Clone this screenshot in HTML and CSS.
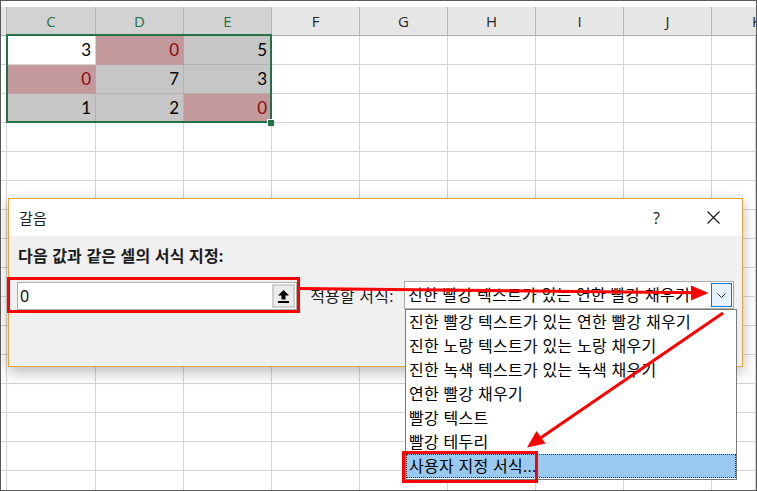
FILE: index.html
```html
<!DOCTYPE html>
<html lang="ko">
<head>
<meta charset="utf-8">
<title>갈음</title>
<link rel="stylesheet" href="styles.css">
</head>
<body>
<div class="screen">
  <div class="topstrip"></div>
  <div class="sheet">
    <div class="row head">
      <span class="corner"></span><span class="on">C</span><span class="on">D</span><span class="on">E</span><span>F</span><span>G</span><span>H</span><span>I</span><span>J</span><span class="clip">K</span>
    </div>
    <div class="row">
      <span class="rh"></span><span class="active">3</span><span class="pink">0</span><span class="gray">5</span><span></span><span></span><span></span><span></span><span></span><span></span>
    </div>
    <div class="row">
      <span class="rh"></span><span class="pink">0</span><span class="gray">7</span><span class="gray">3</span><span></span><span></span><span></span><span></span><span></span><span></span>
    </div>
    <div class="row">
      <span class="rh"></span><span class="gray">1</span><span class="gray">2</span><span class="pink">0</span><span></span><span></span><span></span><span></span><span></span><span></span>
    </div>
    <div class="row"><span class="rh"></span><span></span><span></span><span></span><span></span><span></span><span></span><span></span><span></span><span></span></div>
    <div class="row"><span class="rh"></span><span></span><span></span><span></span><span></span><span></span><span></span><span></span><span></span><span></span></div>
    <div class="row"><span class="rh"></span><span></span><span></span><span></span><span></span><span></span><span></span><span></span><span></span><span></span></div>
    <div class="row"><span class="rh"></span><span></span><span></span><span></span><span></span><span></span><span></span><span></span><span></span><span></span></div>
    <div class="row"><span class="rh"></span><span></span><span></span><span></span><span></span><span></span><span></span><span></span><span></span><span></span></div>
    <div class="row"><span class="rh"></span><span></span><span></span><span></span><span></span><span></span><span></span><span></span><span></span><span></span></div>
    <div class="row"><span class="rh"></span><span></span><span></span><span></span><span></span><span></span><span></span><span></span><span></span><span></span></div>
    <div class="row"><span class="rh"></span><span></span><span></span><span></span><span></span><span></span><span></span><span></span><span></span><span></span></div>
    <div class="row"><span class="rh"></span><span></span><span></span><span></span><span></span><span></span><span></span><span></span><span></span><span></span></div>
    <div class="row"><span class="rh"></span><span></span><span></span><span></span><span></span><span></span><span></span><span></span><span></span><span></span></div>
    <div class="row"><span class="rh"></span><span></span><span></span><span></span><span></span><span></span><span></span><span></span><span></span><span></span></div>
    <div class="row"><span class="rh"></span><span></span><span></span><span></span><span></span><span></span><span></span><span></span><span></span><span></span></div>
    <div class="row"><span class="rh"></span><span></span><span></span><span></span><span></span><span></span><span></span><span></span><span></span><span></span></div>
  </div>

  <div class="selection"></div>
  <div class="handle"></div>

  <div class="dialog">
    <div class="titlebar">
      <span class="title">갈음</span>
      <span class="tbtn">?</span>
      <span class="tbtn">
        <svg class="close" width="13" height="13" viewBox="0 0 13 13"><path d="M0.5 0.5 L12.5 12.5 M12.5 0.5 L0.5 12.5" stroke="#1a1a1a" stroke-width="1.2" fill="none"/></svg>
      </span>
    </div>
    <div class="body">
      <div class="prompt">다음 값과 같은 셀의 서식 지정:</div>
      <div class="inputs">
        <div class="refbox">
          <span class="refval">0</span>
          <span class="refbtn">
            <svg width="11" height="13" viewBox="0 0 11 13"><polygon points="5.5,0 11,5.5 7.5,5.5 7.5,9.5 3.5,9.5 3.5,5.5 0,5.5" fill="#000"/><rect x="0" y="11" width="11" height="2" fill="#000"/></svg>
          </span>
        </div>
        <span class="applylabel">적용할 서식:</span>
        <div class="combo">
          <span class="combo-text">진한 빨강 텍스트가 있는 연한 빨강 채우기</span>
          <span class="combo-btn">
            <svg width="9" height="5" viewBox="0 0 9 5"><path d="M0.5 0.5 L4.5 4.5 L8.5 0.5" stroke="#333" stroke-width="1" fill="none"/></svg>
          </span>
        </div>
      </div>
    </div>
  </div>

  <ul class="droplist">
    <li>진한 빨강 텍스트가 있는 연한 빨강 채우기</li>
    <li>진한 노랑 텍스트가 있는 노랑 채우기</li>
    <li>진한 녹색 텍스트가 있는 녹색 채우기</li>
    <li>연한 빨강 채우기</li>
    <li>빨강 텍스트</li>
    <li>빨강 테두리</li>
    <li class="sel">사용자 지정 서식...</li>
  </ul>

  <div class="mark mark-ref"></div>
  <div class="mark mark-item"></div>

  <svg class="arrows" width="757" height="491" viewBox="0 0 757 491">
    <line x1="299" y1="288.5" x2="694" y2="292.8" stroke="#ff0000" stroke-width="3"/>
    <polygon points="691,285.5 708.5,293 691,300.5" fill="#ff0000"/>
    <line x1="723" y1="313" x2="539" y2="439" stroke="#ff0000" stroke-width="3"/>
    <polygon points="527,447.5 536.5,431 545.5,443.5" fill="#ff0000"/>
  </svg>
</div>
</body>
</html>
```

FILE: styles.css
```css
* {
  box-sizing: border-box;
}

body {
  margin: 0;
  background: #ffffff;
}

.screen {
  position: relative;
  width: 757px;
  height: 491px;
  border: 1px solid #595959;
  overflow: hidden;
  background: #ffffff;
  font-family: "Open Sans", "Noto Sans CJK KR", sans-serif;
  color: #000;
}

.topstrip {
  height: 6px;
  background: #ffffff;
}

.row {
  display: grid;
  grid-template-columns: 6px 89px repeat(7, 88px) 1fr;
  height: 29px;
}

.row > span {
  border-right: 1px solid #d4d4d4;
  border-bottom: 1px solid #d4d4d4;
  font: 17px/28px Lato, "Liberation Sans", sans-serif;
  text-align: right;
  padding-right: 4px;
  color: #000;
  overflow: hidden;
}

.row > span.rh {
  background: #ffffff;
  padding: 0;
}

.head > span {
  background: #e6e6e6;
  border-right-color: #b4b4b4;
  border-bottom-color: #ababab;
  font: 15px/28px "Open Sans", sans-serif;
  text-align: center;
  padding: 0;
  color: #262626;
}

.head > span.corner {
  background: #e6e6e6;
}

.head > span.on {
  background: #d2d2d2;
  color: #217346;
}

.head > span.clip {
  text-align: left;
  padding-left: 40px;
  border-right: none;
}

.row > span.active {
  background: #ffffff;
}

.row > span.pink {
  background: #c4999c;
  color: #8a0b0b;
  border-color: #b9a0a2;
}

.row > span.gray {
  background: #c6c6c6;
  border-color: #b2b2b2;
}

.selection {
  position: absolute;
  left: 5px;
  top: 33px;
  width: 266px;
  height: 89px;
  border: 2px solid #217346;
}

.handle {
  position: absolute;
  left: 266px;
  top: 118px;
  width: 7px;
  height: 7px;
  background: #217346;
  border-left: 1px solid #ffffff;
  border-top: 1px solid #ffffff;
}

.dialog {
  position: absolute;
  left: 7px;
  top: 197px;
  width: 735px;
  height: 169px;
  border: 1px solid #e6a23c;
  background: #f0f0f0;
  box-shadow: 0 5px 14px rgba(0, 0, 0, 0.28);
  display: flex;
  flex-direction: column;
}

.titlebar {
  height: 37px;
  background: #ffffff;
  display: flex;
  align-items: center;
  padding-left: 10px;
  font-size: 15px;
  line-height: 20px;
  color: #1a1a1a;
}

.title {
  flex: 1;
  letter-spacing: 0.3px;
}

.tbtn {
  width: 57px;
  display: flex;
  justify-content: center;
  align-items: center;
  font-size: 16px;
  color: #1a1a1a;
}

.body {
  padding: 10px 8px 0 8px;
}

.prompt {
  font-weight: bold;
  font-size: 16px;
  letter-spacing: 0.2px;
  line-height: 20px;
  padding-left: 1px;
  color: #1a1a1a;
}

.inputs {
  display: flex;
  align-items: center;
  margin-top: 16px;
}

.refbox {
  width: 281px;
  height: 28px;
  border: 1px solid #adadad;
  background: #ffffff;
  display: flex;
  align-items: center;
}

.refval {
  flex: 1;
  padding-left: 2px;
  font-size: 16px;
  line-height: 24px;
}

.refbtn {
  width: 23px;
  height: 24px;
  margin-right: 1px;
  background: #ececec;
  border: 2px solid #cfcfcf;
  display: flex;
  align-items: center;
  justify-content: center;
}

.applylabel {
  width: 94px;
  margin-left: 13px;
  font-size: 16px;
  letter-spacing: 0.2px;
  line-height: 20px;
  color: #1a1a1a;
}

.combo {
  width: 331px;
  height: 28px;
  margin-top: -2px;
  border: 1px solid #ababab;
  background: #ffffff;
  display: flex;
  align-items: center;
  padding-left: 3px;
}

.combo-text {
  flex: 1;
  font-size: 16px;
  letter-spacing: 0.3px;
  line-height: 22px;
  white-space: nowrap;
  overflow: hidden;
}

.combo-btn {
  width: 21px;
  height: 24px;
  margin-right: 1px;
  border: 1px solid #0078d7;
  background: #e5f1fb;
  display: flex;
  align-items: center;
  justify-content: center;
}

.droplist {
  position: absolute;
  left: 404px;
  top: 308px;
  width: 332px;
  height: 171px;
  margin: 0;
  padding: 0;
  list-style: none;
  border: 1px solid #7a7a7a;
  background: #ffffff;
}

.droplist li {
  height: 24px;
  line-height: 24px;
  padding-left: 3px;
  font-size: 16px;
  letter-spacing: 0.3px;
  white-space: nowrap;
}

.droplist li.sel {
  background: #99c9ef;
  outline: 1px dotted #333;
  outline-offset: -1px;
}

.mark {
  position: absolute;
  border: 3px solid #ff0000;
}

.mark-ref {
  left: 6px;
  top: 276px;
  width: 293px;
  height: 36px;
}

.mark-item {
  left: 401px;
  top: 450px;
  width: 136px;
  height: 32px;
}

.arrows {
  position: absolute;
  left: -1px;
  top: -1px;
  pointer-events: none;
}
```
